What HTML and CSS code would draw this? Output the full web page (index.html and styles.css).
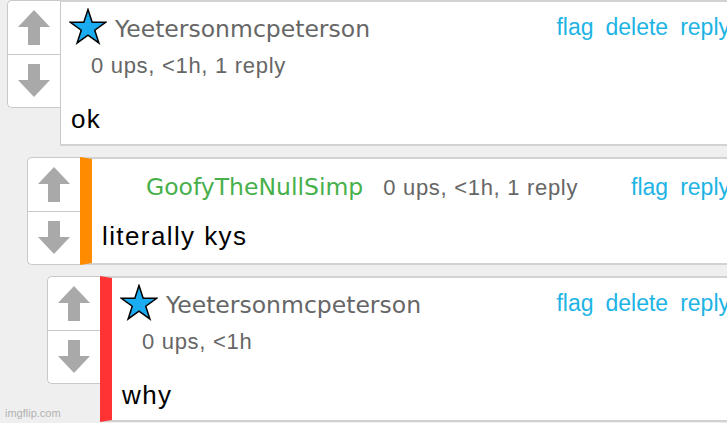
FILE: index.html
```html
<!DOCTYPE html>
<html lang="en">
<head>
<meta charset="utf-8">
<title>Comments</title>
<link rel="stylesheet" href="styles.css">
</head>
<body>
<div class="thread">

  <div class="comment">
    <div class="vote">
      <div class="vote__btn"><svg class="arrow" width="32" height="35" viewBox="0 0 32 35"><polygon points="16,0 32,17 22,17 22,35 10,35 10,17 0,17"/></svg></div>
      <div class="vote__btn"><svg class="arrow" width="32" height="33" viewBox="0 0 32 33"><polygon points="10,0 22,0 22,16 32,16 16,33 0,16 10,16"/></svg></div>
    </div>
    <div class="panel">
      <div class="head">
        <div class="links"><a href="#">flag</a><a href="#">delete</a><a href="#">reply</a></div>
        <svg class="star" width="38" height="37" viewBox="0 0 38 37"><polygon points="19,1.5 23.17,14.26 36.59,14.28 25.75,22.19 29.88,34.97 19,27.1 8.12,34.97 12.25,22.19 1.41,14.28 14.83,14.26"/></svg><span class="name">Yeetersonmcpeterson</span><span class="meta">0 ups, &lt;1h, 1 reply</span>
      </div>
      <div class="body">ok</div>
    </div>
  </div>

  <div class="comment comment--d1 comment--nostar">
    <div class="vote">
      <div class="vote__btn"><svg class="arrow" width="32" height="35" viewBox="0 0 32 35"><polygon points="16,0 32,17 22,17 22,35 10,35 10,17 0,17"/></svg></div>
      <div class="vote__btn"><svg class="arrow" width="32" height="33" viewBox="0 0 32 33"><polygon points="10,0 22,0 22,16 32,16 16,33 0,16 10,16"/></svg></div>
    </div>
    <div class="panel panel--orange">
      <div class="head">
        <div class="links"><a href="#">flag</a><a href="#">reply</a></div>
        <span class="star-gap"></span><span class="name name--green">GoofyTheNullSimp</span><span class="meta">0 ups, &lt;1h, 1 reply</span>
      </div>
      <div class="body">literally kys</div>
    </div>
  </div>

  <div class="comment comment--d2">
    <div class="vote">
      <div class="vote__btn"><svg class="arrow" width="32" height="35" viewBox="0 0 32 35"><polygon points="16,0 32,17 22,17 22,35 10,35 10,17 0,17"/></svg></div>
      <div class="vote__btn"><svg class="arrow" width="32" height="33" viewBox="0 0 32 33"><polygon points="10,0 22,0 22,16 32,16 16,33 0,16 10,16"/></svg></div>
    </div>
    <div class="panel panel--red">
      <div class="head">
        <div class="links"><a href="#">flag</a><a href="#">delete</a><a href="#">reply</a></div>
        <svg class="star" width="38" height="37" viewBox="0 0 38 37"><polygon points="19,1.5 23.17,14.26 36.59,14.28 25.75,22.19 29.88,34.97 19,27.1 8.12,34.97 12.25,22.19 1.41,14.28 14.83,14.26"/></svg><span class="name">Yeetersonmcpeterson</span><span class="meta">0 ups, &lt;1h</span>
      </div>
      <div class="body">why</div>
    </div>
  </div>

</div>
<div class="watermark">imgflip.com</div>
</body>
</html>
```

FILE: styles.css
```css
html, body {
  margin: 0;
  height: 100%;
  overflow: hidden;
  background: #efefef;
}

body {
  position: relative;
  font-family: "Liberation Sans", Arial, sans-serif;
}

.thread {
  width: 740px;
}

.comment {
  display: flex;
  margin-left: 7px;
}

.comment + .comment {
  margin-top: 11px;
}

.comment--d1 {
  margin-left: 27px;
}

.comment--d2 {
  margin-left: 47px;
}

.vote {
  flex: 0 0 53px;
  height: 108px;
  box-sizing: border-box;
  border: 1px solid #c9c9c9;
  border-right: 0;
  border-radius: 5px 0 0 5px;
  background: #fff;
  display: flex;
  flex-direction: column;
}

.vote__btn {
  flex: 1;
  display: flex;
  align-items: center;
  justify-content: center;
}

.vote__btn + .vote__btn {
  border-top: 1px solid #c9c9c9;
}

.arrow {
  fill: #a9a9a9;
  display: block;
}

.panel {
  flex: 1;
  min-width: 0;
  background: #fff;
  border-top: 2px solid #d2d2d2;
  border-bottom: 2px solid #d2d2d2;
  border-left: 1px solid #c9c9c9;
  padding: 6px 10px 10px 10px;
}

.panel--orange {
  border-left: 12px solid #ff8c00;
}

.panel--red {
  border-left: 12px solid #ff3333;
}

.head {
  font-size: 22px;
  line-height: 36px;
  color: #666;
}

.links {
  float: right;
  display: flex;
  gap: 12px;
  padding-left: 12px;
  font-size: 23px;
  line-height: 38px;
}

.comment--nostar .links {
  margin-top: 3px;
}

.links a {
  color: #1db4e5;
  text-decoration: none;
}

.star {
  vertical-align: -8px;
  margin-left: -2px;
  margin-right: 8px;
  fill: #1aacf0;
  stroke: #000;
  stroke-width: 1.5;
  stroke-linejoin: miter;
}

.star-gap {
  display: inline-block;
  width: 38px;
  height: 30px;
  margin-left: -2px;
  margin-right: 8px;
}

.name {
  display: inline-block;
  font-family: "DejaVu Sans", Verdana, sans-serif;
  font-size: 23.5px;
  color: #666;
}

.name--green {
  color: #48b04b;
}

.meta {
  display: inline-block;
  margin-left: 20px;
  letter-spacing: 0.7px;
  color: #666;
}

.body {
  margin-top: 20px;
  font-size: 26px;
  line-height: 30px;
  letter-spacing: 1.4px;
  color: #000;
}

.comment--nostar .body {
  margin-top: 15px;
}

.watermark {
  position: absolute;
  left: 5px;
  bottom: 4px;
  font-size: 11px;
  color: #b2b2b2;
}
```
